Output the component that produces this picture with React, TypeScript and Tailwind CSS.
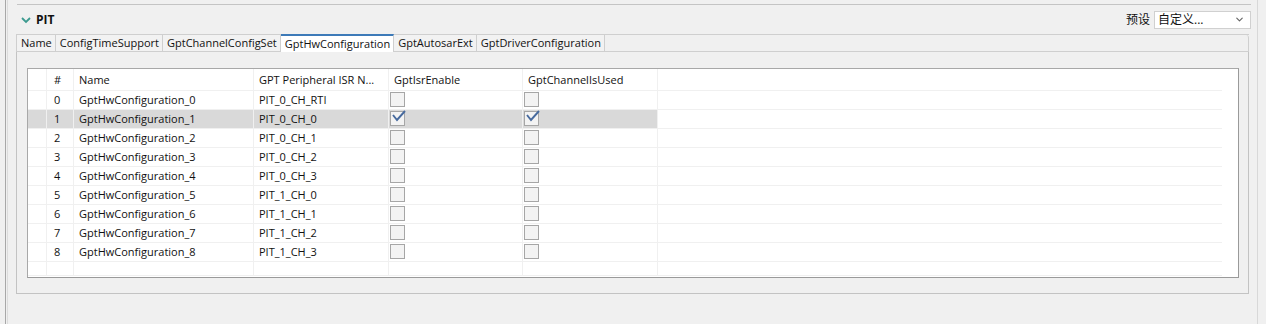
import { ChevronDown } from 'lucide-react'

const ROWS = [
  { name: 'GptHwConfiguration_0', isr: 'PIT_0_CH_RTI', en: false, used: false },
  { name: 'GptHwConfiguration_1', isr: 'PIT_0_CH_0', en: true, used: true },
  { name: 'GptHwConfiguration_2', isr: 'PIT_0_CH_1', en: false, used: false },
  { name: 'GptHwConfiguration_3', isr: 'PIT_0_CH_2', en: false, used: false },
  { name: 'GptHwConfiguration_4', isr: 'PIT_0_CH_3', en: false, used: false },
  { name: 'GptHwConfiguration_5', isr: 'PIT_1_CH_0', en: false, used: false },
  { name: 'GptHwConfiguration_6', isr: 'PIT_1_CH_1', en: false, used: false },
  { name: 'GptHwConfiguration_7', isr: 'PIT_1_CH_2', en: false, used: false },
  { name: 'GptHwConfiguration_8', isr: 'PIT_1_CH_3', en: false, used: false },
]

const TABS = ['Name', 'ConfigTimeSupport', 'GptChannelConfigSet', 'GptHwConfiguration', 'GptAutosarExt', 'GptDriverConfiguration']

function Check({ on }: { on: boolean }) {
  return (
    <div className="relative w-[15px] h-[15px] border border-[#a6a6a6] bg-[#f3f3f3]">
      {on && (
        <svg width="16" height="14" viewBox="0 0 16 14" className="absolute -top-[3px] left-0">
          <polyline points="2,6 6,11 14,2" fill="none" stroke="#476a9e" strokeWidth="1.9" />
        </svg>
      )}
    </div>
  )
}

export default function App() {
  return (
    <div className="w-[1266px] h-[324px] bg-[#f0f0f0] flex text-[11px] text-[#111]" style={{ fontFamily: '"Open Sans", "Noto Sans CJK SC", sans-serif' }}>
      <div className="w-[5px]" />
      <div className="w-[1px] bg-[#a8a8a8]" />
      <div className="w-[2px] border-r border-[#dcdcdc]" />
      <div className="flex-1 flex flex-col pl-[8px] pr-[6px]">
        {/* previous section bottom */}
        <div className="h-[5px] border-b border-[#c4c4c4] ml-[1px]" />

        {/* PIT header */}
        <div className="flex items-center h-[28px] pt-[1px]">
          <svg width="10" height="8" viewBox="0 0 10 8" className="ml-[5px] mr-[5px]">
            <polyline points="1,2 5,6 9,2" fill="none" stroke="#3c9a8f" strokeWidth="1.8" />
          </svg>
          <span className="font-bold text-[12px]">PIT</span>
          <div className="flex-1" />
          <span className="mr-[4px] text-[12px]">预设</span>
          <div className="w-[97px] h-[18px] bg-white border border-[#d0d0d0] flex items-center pl-[3px] pr-[5px]">
            <span className="flex-1 text-[12px]">自定义...</span>
            <ChevronDown size={11} strokeWidth={2.5} className="text-[#666]" />
          </div>
        </div>

        {/* tab strip */}
        <div className="flex h-[18px] mt-[1px] border-t border-l border-[#cfcfcf] w-[1233px]">
          {TABS.map((t) => {
            const sel = t === 'GptHwConfiguration'
            return (
              <div
                key={t}
                className={
                  sel
                    ? 'pl-[4px] pr-[3px] h-[18px] leading-[15px] bg-white border-r border-[#cfcfcf] border-t-2 border-t-[#3d7ab8] -mt-[1px]'
                    : 'pl-[4px] pr-[3px] h-[17px] leading-[16px] bg-[#f2f2f2] border-r border-b border-[#cfcfcf]'
                }
              >
                {t}
              </div>
            )
          })}
          <div className="flex-1 border-b border-r border-[#cfcfcf] rounded-tr-[3px]" />
        </div>

        {/* folder body */}
        <div className="w-[1233px] h-[242px] border-l border-r border-b border-[#c3c3c3] bg-[#f0f0f0] pt-[16px] pl-[10px] pr-[9px]">
          <div className="h-[210px] bg-white border border-[#a8a8a8] border-b-[#9a9a9a] border-r-[#9a9a9a] pr-[16px] flex flex-col">
            <div className="flex h-[22px] leading-[22px] border-b border-[#f0f0f0]">
              <div className="w-[19px] border-r border-[#f0f0f0]" />
              <div className="w-[27px] pl-[7px] border-r border-[#f0f0f0]">#</div>
              <div className="w-[180px] pl-[5px] border-r border-[#f0f0f0]">Name</div>
              <div className="w-[135px] pl-[5px] border-r border-[#f0f0f0]">GPT Peripheral ISR N...</div>
              <div className="w-[134px] pl-[5px] border-r border-[#f0f0f0]">GptIsrEnable</div>
              <div className="w-[135px] pl-[5px] border-r border-[#f0f0f0]">GptChannelIsUsed</div>
              <div className="flex-1" />
            </div>
            {ROWS.map((r, i) => (
              <div key={i} className="flex h-[19px] leading-[18px] border-b border-[#f0f0f0]">
                <div className={`flex w-[630px] ${i === 1 ? 'bg-[#d9d9d9]' : ''}`}>
                  <div className="w-[19px] border-r border-[#f0f0f0]" />
                  <div className="w-[27px] pl-[7px] border-r border-[#f0f0f0]">{i}</div>
                  <div className="w-[180px] pl-[5px] border-r border-[#f0f0f0]">{r.name}</div>
                  <div className="w-[135px] pl-[5px] border-r border-[#f0f0f0]">{r.isr}</div>
                  <div className="w-[134px] pl-[1px] pt-[1px] border-r border-[#f0f0f0]">
                    <Check on={r.en} />
                  </div>
                  <div className="w-[135px] pl-[1px] pt-[1px] border-r border-[#f0f0f0]">
                    <Check on={r.used} />
                  </div>
                </div>
                <div className="flex-1" />
              </div>
            ))}
            <div className="flex flex-1 border-b border-[#f0f0f0] mb-[1px]">
              <div className="w-[19px] border-r border-[#f0f0f0]" />
              <div className="w-[27px] border-r border-[#f0f0f0]" />
              <div className="w-[180px] border-r border-[#f0f0f0]" />
              <div className="w-[135px] border-r border-[#f0f0f0]" />
              <div className="w-[134px] border-r border-[#f0f0f0]" />
              <div className="w-[135px] border-r border-[#f0f0f0]" />
            </div>
          </div>
        </div>
      </div>
      <div className="w-[1px] bg-[#d8d8d8]" />
      <div className="w-[8px]" />
    </div>
  )
}
